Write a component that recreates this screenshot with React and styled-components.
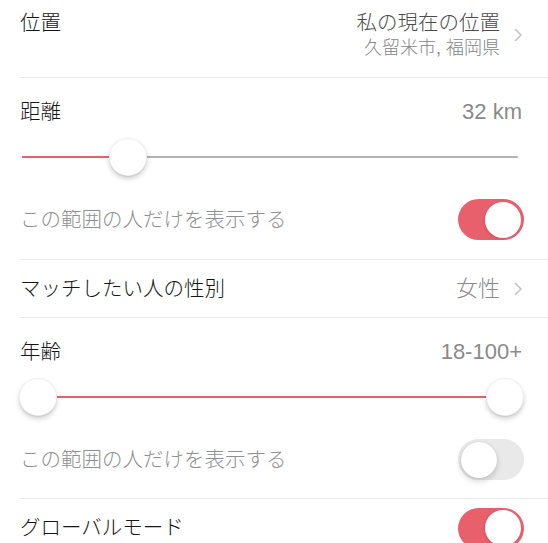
import React from 'react';
import styled, { createGlobalStyle } from 'styled-components';

const GlobalStyle = createGlobalStyle`
  body {
    margin: 0;
    background: #fff;
    font-family: "Liberation Sans", "Noto Sans CJK JP", sans-serif;
    overflow: hidden;
  }
`;

const RED = '#e9606d';

const Page = styled.div`
  width: 548px;
  height: 543px;
  overflow: hidden;
  background: #fff;
`;

// iOS-like cell: separator inset from the left, runs to the right edge
const Cell = styled.div`
  box-sizing: border-box;
  margin-left: 20px;
  padding-right: 26px;
  height: ${(p) => p.$h}px;
  border-bottom: ${(p) => (p.$last ? 'none' : '1px solid #ebebeb')};
`;

const Row = styled(Cell)`
  display: flex;
  align-items: center;
  justify-content: space-between;
`;

const LocationRow = styled(Cell)`
  display: flex;
  align-items: flex-start;
  justify-content: space-between;
  padding-top: 10px;
`;

const Block = styled(Cell)`
  display: flex;
  flex-direction: column;
`;

const Label = styled.div`
  font-size: 20.5px;
  font-weight: 300;
  line-height: 26px;
  color: #151515;
`;

const SubLabel = styled.div`
  font-size: 20.5px;
  font-weight: 300;
  line-height: 26px;
  color: #8f8f8f;
`;

const Value = styled.div`
  font-size: 22px;
  font-weight: 300;
  line-height: 26px;
  color: #8a8a8a;
`;

const RightGroup = styled.div`
  display: flex;
  align-items: center;
  gap: 14px;
  margin-right: -1px;
`;

const Lines = styled.div`
  display: flex;
  flex-direction: column;
  align-items: flex-end;
`;

const MainLine = styled.div`
  font-size: 20.5px;
  font-weight: 300;
  line-height: 26px;
  color: #4a4a4a;
`;

const SmallLine = styled.div`
  font-size: 18px;
  font-weight: 300;
  line-height: 24px;
  color: #858585;
`;

const Header = styled.div`
  display: flex;
  justify-content: space-between;
  align-items: center;
  padding-top: 20px;
  height: 27px;
`;

const SliderWrap = styled.div`
  position: relative;
  height: 40px;
  margin: 12px 4px 0 2px;
`;

const Track = styled.div`
  position: absolute;
  left: 0;
  right: 0;
  top: 19px;
  height: 2px;
  border-radius: 1px;
  background: #b3b3b3;
`;

const Fill = styled.div`
  position: absolute;
  top: 19px;
  height: 2px;
  background: ${RED};
`;

const Thumb = styled.div`
  position: absolute;
  top: 1px;
  width: 36px;
  height: 36px;
  border-radius: 50%;
  background: #fff;
  border: 0.5px solid rgba(0, 0, 0, 0.06);
  box-shadow: 0 3px 5px rgba(0, 0, 0, 0.18), 0 1px 1px rgba(0, 0, 0, 0.08);
`;

const ToggleRow = styled.div`
  display: flex;
  justify-content: space-between;
  align-items: center;
  height: 41px;
  margin-top: 22px;
`;

const Switch = styled.div`
  box-sizing: border-box;
  width: 66px;
  height: 41px;
  border-radius: 21px;
  padding: 2.5px 3px;
  margin-right: -2px;
  display: flex;
  justify-content: ${(p) => (p.$on ? 'flex-end' : 'flex-start')};
  background: ${(p) => (p.$on ? RED : '#e9e9ea')};
`;

const Knob = styled.div`
  width: 36px;
  height: 36px;
  border-radius: 50%;
  background: #fff;
  box-shadow: ${(p) =>
    p.$on
      ? '-1px 1px 3px rgba(0,0,0,0.12)'
      : '0 3px 6px rgba(0,0,0,0.18), 0 0 1px rgba(0,0,0,0.15)'};
`;

const Chevron = () => (
  <svg width="9" height="14" viewBox="0 0 9 14">
    <path d="M1.5 1.5 L7 7 L1.5 12.5" fill="none" stroke="#c4c4c8" strokeWidth="1.6" strokeLinecap="round" strokeLinejoin="round" />
  </svg>
);

const Toggle = ({ on }) => (
  <Switch $on={on}>
    <Knob $on={on} />
  </Switch>
);

// track runs from x=22 to x=518; thumb centres from 15px to width-14px
const SLIDER_W = 548 - 20 - 26 - 6;
const pos = (f) => 15 + f * (SLIDER_W - 29);

const RangeSlider = ({ from, to, single }) => {
  const a = pos(from);
  const b = pos(to);
  return (
    <SliderWrap>
      <Track />
      {single ? (
        <Fill style={{ left: 0, width: b }} />
      ) : (
        <Fill style={{ left: a, width: b - a }} />
      )}
      {!single && <Thumb style={{ left: a - 18 }} />}
      <Thumb style={{ left: b - 18 }} />
    </SliderWrap>
  );
};

const App = () => (
  <Page>
    <GlobalStyle />
    <LocationRow $h={78}>
      <Label>位置</Label>
      <RightGroup>
        <Lines>
          <MainLine>私の現在の位置</MainLine>
          <SmallLine>久留米市, 福岡県</SmallLine>
        </Lines>
        <Chevron />
      </RightGroup>
    </LocationRow>

    <Block $h={182}>
      <Header>
        <Label>距離</Label>
        <Value>32 km</Value>
      </Header>
      <RangeSlider single to={0.192} />
      <ToggleRow>
        <SubLabel>この範囲の人だけを表示する</SubLabel>
        <Toggle on />
      </ToggleRow>
    </Block>

    <Row $h={58}>
      <Label>マッチしたい人の性別</Label>
      <RightGroup>
        <Value>女性</Value>
        <Chevron />
      </RightGroup>
    </Row>

    <Block $h={181}>
      <Header>
        <Label>年齢</Label>
        <Value>18-100+</Value>
      </Header>
      <RangeSlider from={0} to={1} />
      <ToggleRow>
        <SubLabel>この範囲の人だけを表示する</SubLabel>
        <Toggle on={false} />
      </ToggleRow>
    </Block>

    <Row $h={58} $last>
      <Label>グローバルモード</Label>
      <Toggle on />
    </Row>
  </Page>
);

export default App;
